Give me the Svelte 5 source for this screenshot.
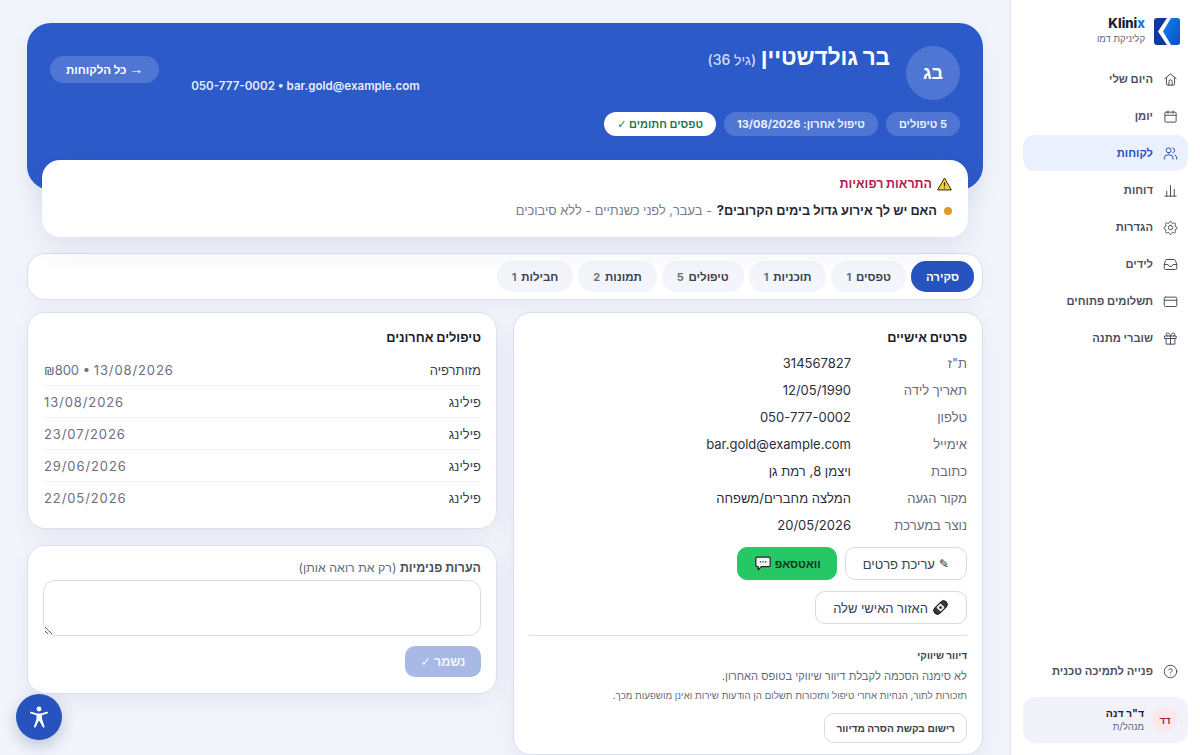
<script lang="ts">
  const nav = [
    { label: "היום שלי", icon: "home" },
    { label: "יומן", icon: "calendar" },
    { label: "לקוחות", icon: "users", active: true },
    { label: "דוחות", icon: "chart" },
    { label: "הגדרות", icon: "gear" },
    { label: "לידים", icon: "inbox" },
    { label: "תשלומים פתוחים", icon: "card" },
    { label: "שוברי מתנה", icon: "gift" },
  ];

  const icons: Record<string, string> = {
    home: "M3 10.5 12 3l9 7.5M5.5 9v10a2 2 0 0 0 2 2h9a2 2 0 0 0 2-2V9M9.5 21v-6a2.5 2.5 0 0 1 5 0v6",
    calendar: "M5 5h14a2 2 0 0 1 2 2v12a2 2 0 0 1-2 2H5a2 2 0 0 1-2-2V7a2 2 0 0 1 2-2zM3 10h18M8 3v4M16 3v4",
    users: "M9 11a4 4 0 1 0 0-8 4 4 0 0 0 0 8zM2 21v-1a6 6 0 0 1 6-6h2a6 6 0 0 1 6 6v1M16 3.2a4 4 0 0 1 0 7.6M19 14.3a6 6 0 0 1 3 5.2V21",
    chart: "M3 21h18M6 21v-8M12 21V4M18 21v-11",
    gear: "M12 8.5a3.5 3.5 0 1 0 0 7 3.5 3.5 0 0 0 0-7zM10.3 3.3a1.8 1.8 0 0 1 3.4 0l.3 1a1.8 1.8 0 0 0 2.6 1l.9-.5a1.8 1.8 0 0 1 2.4 2.4l-.5.9a1.8 1.8 0 0 0 1 2.6l1 .3a1.8 1.8 0 0 1 0 3.4l-1 .3a1.8 1.8 0 0 0-1 2.6l.5.9a1.8 1.8 0 0 1-2.4 2.4l-.9-.5a1.8 1.8 0 0 0-2.6 1l-.3 1a1.8 1.8 0 0 1-3.4 0l-.3-1a1.8 1.8 0 0 0-2.6-1l-.9.5a1.8 1.8 0 0 1-2.4-2.4l.5-.9a1.8 1.8 0 0 0-1-2.6l-1-.3a1.8 1.8 0 0 1 0-3.4l1-.3a1.8 1.8 0 0 0 1-2.6l-.5-.9a1.8 1.8 0 0 1 2.4-2.4l.9.5a1.8 1.8 0 0 0 2.6-1z",
    inbox: "M6 4h12a2 2 0 0 1 1.9 1.4L22 12v6a2 2 0 0 1-2 2H4a2 2 0 0 1-2-2v-6l2.1-6.6A2 2 0 0 1 6 4zM2 12h6l2 3h4l2-3h6",
    card: "M4 5h16a2 2 0 0 1 2 2v11a2 2 0 0 1-2 2H4a2 2 0 0 1-2-2V7a2 2 0 0 1 2-2zM2 10h20",
    gift: "M3 8h18v4H3zM5 12v9h14v-9M12 8v13M12 8S10.5 3 7.5 3a2.5 2.5 0 0 0 0 5M12 8s1.5-5 4.5-5a2.5 2.5 0 0 1 0 5",
  };

  const chips = ["5 טיפולים", "טיפול אחרון: 13/08/2026"];

  const tabs = [
    { label: "סקירה", active: true },
    { label: "טפסים", count: 1 },
    { label: "תוכניות", count: 1 },
    { label: "טיפולים", count: 5 },
    { label: "תמונות", count: 2 },
    { label: "חבילות", count: 1 },
  ];

  const details = [
    ["ת\"ז", "314567827"],
    ["תאריך לידה", "12/05/1990"],
    ["טלפון", "050-777-0002"],
    ["אימייל", "bar.gold@example.com"],
    ["כתובת", "ויצמן 8, רמת גן"],
    ["מקור הגעה", "המלצה מחברים/משפחה"],
    ["נוצר במערכת", "20/05/2026"],
  ];

  const treatments = [
    { name: "מזותרפיה", price: "₪800 • ", date: "13/08/2026" },
    { name: "פילינג", price: "", date: "13/08/2026" },
    { name: "פילינג", price: "", date: "23/07/2026" },
    { name: "פילינג", price: "", date: "29/06/2026" },
    { name: "פילינג", price: "", date: "22/05/2026" },
  ];
</script>

<div class="layout" dir="rtl">
  <aside class="sidebar">
    <div class="brand">
      <svg class="logo" viewBox="0 0 26 27" width="26" height="27" aria-hidden="true">
        <defs>
          <linearGradient id="lg" x1="0" y1="0" x2="1" y2="1">
            <stop offset="0" stop-color="#0a84f0" />
            <stop offset="1" stop-color="#0f4fc4" />
          </linearGradient>
        </defs>
        <rect width="26" height="27" rx="3" fill="#0d3a9c" />
        <path d="M13 0h10a3 3 0 0 1 3 3v21a3 3 0 0 1-3 3H13L4 13.5z" fill="#fff" />
        <path d="M17 0h6a3 3 0 0 1 3 3v21a3 3 0 0 1-3 3h-6l-8-13.5z" fill="url(#lg)" />
      </svg>
      <div class="brand-text">
        <div class="brand-name" dir="ltr">Klini<span>x</span></div>
        <div class="brand-sub">קליניקת דמו</div>
      </div>
    </div>

    <nav class="nav">
      {#each nav as item}
        <div class="nav-item" class:active={item.active}>
          <svg viewBox="0 0 24 24" width="15" height="15" class="nav-icon"><path d={icons[item.icon]} /></svg>
          <span>{item.label}</span>
        </div>
      {/each}
    </nav>

    <div class="side-bottom">
      <div class="nav-item">
        <svg viewBox="0 0 24 24" width="15" height="15" class="nav-icon">
          <circle cx="12" cy="12" r="10" />
          <path d="M9.2 9.3a2.9 2.9 0 0 1 5.6 1c0 2-2.8 2.4-2.8 4M12 17.6v.1" />
        </svg>
        <span>פנייה לתמיכה טכנית</span>
      </div>
      <div class="user">
        <div class="user-avatar">דד</div>
        <div>
          <div class="user-name">ד"ר דנה</div>
          <div class="user-role">מנהל/ת</div>
        </div>
      </div>
    </div>
  </aside>

  <main class="main">
    <section class="hero">
      <div class="hero-top">
        <div class="avatar">בג</div>
        <div class="hero-id">
          <h1>בר גולדשטיין <small>(גיל 36)</small></h1>
        </div>
        <div class="hero-contact" dir="ltr">050-777-0002 • bar.gold@example.com</div>
        <button class="back"><span class="arrow">→</span> כל הלקוחות</button>
      </div>
      <div class="chips">
        {#each chips as chip}
          <span class="chip">{chip}</span>
        {/each}
        <span class="chip chip-ok">טפסים חתומים <span class="check">✓</span></span>
      </div>
    </section>

    <section class="alerts">
      <div class="alert-title">
        <svg viewBox="0 0 24 22" width="15" height="14">
          <path d="M12 1.5 23 20.5H1z" fill="#fbd02c" stroke="#2b2b1a" stroke-width="1.6" stroke-linejoin="round" />
          <path d="M12 8v6.5M12 16.5v1.6" stroke="#2b2b1a" stroke-width="2" />
        </svg>
        התראות רפואיות
      </div>
      <div class="alert-row">
        <i class="dot"></i>
        <b>האם יש לך אירוע גדול בימים הקרובים?</b>
        <span>- בעבר, לפני כשנתיים - ללא סיבוכים</span>
      </div>
    </section>

    <div class="tabs">
      {#each tabs as tab}
        <button class="tab" class:active={tab.active}>
          {tab.label}
          {#if tab.count}<span class="count">{tab.count}</span>{/if}
        </button>
      {/each}
    </div>

    <div class="columns">
      <section class="card details">
        <h2>פרטים אישיים</h2>
        <div class="rows">
          {#each details as [k, v]}
            <div class="row">
              <span class="key">{k}</span>
              <span class="val">{v}</span>
            </div>
          {/each}
        </div>
        <div class="actions">
          <button class="btn"><span class="pencil">✎</span> עריכת פרטים</button>
          <button class="btn wa">
            <svg viewBox="0 0 20 18" width="16" height="15">
              <path d="M3 1h14a2 2 0 0 1 2 2v8a2 2 0 0 1-2 2H8l-4 4v-4H3a2 2 0 0 1-2-2V3a2 2 0 0 1 2-2z" fill="#f4f4f4" stroke="#222" stroke-width="1.5" stroke-linejoin="round" />
              <path d="M6 7h1.6M9.3 7h1.6M12.600 7h1.6" stroke="#222" stroke-width="1.6" />
            </svg>
            וואטסאפ
          </button>
        </div>
        <div class="actions">
          <button class="btn">
            <svg viewBox="0 0 20 20" width="17" height="17">
              <rect x="0.5" y="5.5" width="19" height="9" rx="4.5" transform="rotate(-45 10 10)" fill="#3a3a3a" stroke="#111" />
              <rect x="6" y="6" width="8" height="8" rx="1.500" transform="rotate(-45 10 10)" fill="#e4e4e4" stroke="#111" />
              <circle cx="10" cy="10" r="1.5" fill="#222" />
            </svg>
            האזור האישי שלה
          </button>
        </div>
        <div class="marketing">
          <h3>דיוור שיווקי</h3>
          <p class="m1">לא סימנה הסכמה לקבלת דיוור שיווקי בטופס האחרון.</p>
          <p class="m2">תזכורות לתור, הנחיות אחרי טיפול ותזכורות תשלום הן הודעות שירות ואינן מושפעות מכך.</p>
          <button class="btn small">רישום בקשת הסרה מדיוור</button>
        </div>
      </section>

      <div class="side-col">
        <section class="card recent">
          <h2>טיפולים אחרונים</h2>
          <div class="t-list">
            {#each treatments as t}
              <div class="t-row">
                <span class="t-name">{t.name}</span>
                <span class="t-meta" dir="ltr">{t.price}<span class="t-date">{t.date}</span></span>
              </div>
            {/each}
          </div>
        </section>

        <section class="card notes">
          <label for="notes"><b>הערות פנימיות</b> (רק את רואה אותן)</label>
          <textarea id="notes"></textarea>
          <button class="save">נשמר <span class="check">✓</span></button>
        </section>
      </div>
    </div>
  </main>

  <button class="a11y" aria-label="נגישות">
    <svg viewBox="0 0 24 24" width="24" height="24" fill="#fff">
      <circle cx="12" cy="4" r="2.4" />
      <path d="M3 7.6c0-.7.6-1.1 1.2-.9l5 1.5c1.6.4 3.9.4 5.6 0l5-1.5c.6-.2 1.2.2 1.2.9 0 .4-.3.8-.7.9l-5.3 1.7v3.6l2.5 7.6c.2.6-.1 1.1-.7 1.2-.4.1-.9-.2-1-.6L12.4 16h-.8l-2.900 6c-.2.4-.6.7-1 .6-.6-.1-.9-.6-.7-1.2l2.500-7.600v-3.600L3.700 8.500c-.4-.1-.7-.5-.7-.9z" />
    </svg>
  </button>
</div>

<style>
  :global(html), :global(body) {
    margin: 0;
    height: 100%;
    overflow: hidden;
  }

  :global(body) {
    background: #f3f5fc;
    font-family: Inter, "Noto Sans", "Liberation Sans", sans-serif;
    color: #1f2430;
  }

  button {
    font-family: inherit;
    cursor: pointer;
  }

  .layout {
    display: flex;
    height: 755px;
    overflow: hidden;
  }

  .check {
    font-family: "DejaVu Sans", sans-serif;
    font-weight: 400;
  }

  /* SIDEBAR */
  .sidebar {
    box-sizing: border-box;
    width: 190px;
    flex: none;
    background: #fff;
    border-left: 1px solid #dfe2ee;
    padding: 18px 12px 12px 12px;
    display: flex;
    flex-direction: column;
  }

  .brand {
    display: flex;
    align-items: center;
    gap: 9px;
    padding: 0 8px 0 0;
    margin-bottom: 16px;
  }

  .brand-text {
    margin-top: -2px;
  }

  .brand-name {
    font-size: 13px;
    font-weight: 800;
    line-height: 15px;
    color: #15203a;
    text-align: right;
  }
  .brand-name span { color: #1576e0; }

  .brand-sub {
    font-size: 9.5px;
    line-height: 13px;
    color: #5f6675;
    margin-top: 1px;
  }

  .nav {
    display: flex;
    flex-direction: column;
    gap: 1px;
  }

  .nav-item {
    display: flex;
    align-items: center;
    gap: 10px;
    height: 36px;
    padding: 0 10px;
    border-radius: 12px;
    font-size: 11.2px;
    font-weight: 600;
    color: #4b5160;
  }

  .nav-item.active {
    background: #eaf0fd;
    color: #2653bd;
    font-weight: 700;
  }

  .nav-icon {
    flex: none;
    fill: none;
    stroke: currentColor;
    stroke-width: 1.6;
    stroke-linecap: round;
    stroke-linejoin: round;
  }

  .side-bottom {
    margin-top: auto;
    display: flex;
    flex-direction: column;
    gap: 8px;
  }

  .user {
    display: flex;
    align-items: center;
    gap: 8px;
    height: 46px;
    padding: 0 10px;
    border-radius: 12px;
    background: #f2f3fa;
  }

  .user-avatar {
    width: 26px;
    height: 26px;
    border-radius: 50%;
    background: #fbe8ec;
    color: #a8203f;
    font-size: 9.5px;
    font-weight: 700;
    display: flex;
    align-items: center;
    justify-content: center;
  }

  .user-name {
    font-size: 10.5px;
    font-weight: 700;
    line-height: 13px;
  }

  .user-role {
    font-size: 9.5px;
    line-height: 13px;
    color: #5f6675;
  }

  /* MAIN */
  .main {
    flex: 1;
    min-width: 0;
    padding: 23px 27px 0 27px;
  }

  .hero {
    box-sizing: border-box;
    height: 167px;
    background: #2c5ac8;
    border-radius: 24px;
    color: #fff;
    padding: 23px 23px 0;
    box-shadow: 0 8px 24px rgba(30, 50, 110, 0.08);
  }

  .hero-top {
    display: flex;
    align-items: flex-start;
    gap: 16px;
    height: 66px;
  }

  .avatar {
    width: 54px;
    height: 54px;
    flex: none;
    border-radius: 50%;
    background: #5076d3;
    font-size: 18px;
    font-weight: 800;
    display: flex;
    align-items: center;
    justify-content: center;
  }

  .hero-id {
    flex: 1;
  }

  h1 {
    margin: -2px 0 0;
    font-size: 22.5px;
    line-height: 26px;
    font-weight: 900;
  }

  h1 small {
    font-size: 14px;
    font-weight: 500;
    color: #d5dff7;
  }

  .hero-contact {
    font-size: 11.6px;
    font-weight: 600;
    color: #e6ecfb;
    margin-top: 33px;
    margin-inline-end: -16px;
    white-space: nowrap;
  }

  .back {
    height: 27px;
    margin-top: 10px;
    padding: 0 16px;
    border: none;
    border-radius: 14px;
    background: #5076d3;
    color: #fff;
    font-size: 11.5px;
    font-weight: 700;
    margin-inline-start: 16px;
    white-space: nowrap;
  }

  .arrow {
    font-family: "Liberation Sans", sans-serif;
    font-size: 14px;
    font-weight: 400;
    line-height: 1;
  }

  .chips {
    display: flex;
    gap: 8px;
  }

  .chip {
    height: 24px;
    padding: 0 13px;
    border-radius: 12px;
    background: #5076d3;
    font-size: 11px;
    font-weight: 700;
    line-height: 24px;
    color: #eef2fc;
  }

  .chip-ok {
    background: #fff;
    color: #1c7a50;
  }

  .alerts {
    box-sizing: border-box;
    height: 77px;
    margin: -30px 15px 0;
    position: relative;
    background: #fff;
    border-radius: 18px;
    padding: 15px 16px 0;
    box-shadow: 0 10px 30px rgba(30, 50, 110, 0.1);
  }

  .alert-title {
    display: flex;
    align-items: center;
    gap: 5px;
    font-size: 12.5px;
    font-weight: 800;
    color: #b81e4d;
    line-height: 18px;
  }

  .alert-row {
    display: flex;
    align-items: center;
    gap: 5px;
    margin-top: 9px;
    font-size: 12.8px;
    line-height: 18px;
    color: #777d8a;
  }

  .alert-row b {
    color: #252a36;
    font-weight: 700;
  }

  .dot {
    width: 8px;
    height: 8px;
    border-radius: 50%;
    background: #e09a2c;
    margin-left: 2px;
  }

  .tabs {
    box-sizing: border-box;
    height: 47px;
    margin-top: 16px;
    padding: 7px 8px;
    display: flex;
    gap: 5px;
    background: #fff;
    border: 1px solid #dcdfec;
    border-radius: 18px;
    box-shadow: 0 6px 20px rgba(30, 50, 110, 0.05);
  }

  .tab {
    height: 31px;
    padding: 0 15px;
    border: none;
    border-radius: 15px;
    background: #f3f5fb;
    color: #3b4150;
    font-size: 11.5px;
    font-weight: 700;
    white-space: nowrap;
  }

  .tab.active {
    background: #2653bd;
    color: #fff;
  }

  .count {
    font-size: 11px;
    font-weight: 700;
    color: #6a7080;
    margin-inline-start: 2px;
  }

  .columns {
    display: grid;
    grid-template-columns: 470px 470px;
    gap: 16px;
    margin-top: 12px;
    align-items: start;
  }

  .card {
    box-sizing: border-box;
    background: #fff;
    border: 1px solid #dcdfec;
    border-radius: 18px;
    box-shadow: 0 8px 24px rgba(30, 50, 110, 0.07);
  }

  h2 {
    margin: 0;
    font-size: 12.8px;
    line-height: 18px;
    font-weight: 800;
    color: #1c2130;
  }

  .details {
    padding: 16px 15px 11px;
  }

  .rows {
    margin-top: 3px;
  }

  .row {
    display: flex;
    height: 26.9px;
    align-items: center;
    font-size: 13px;
  }

  .key {
    width: 116px;
    color: #666c7a;
  }

  .val {
    color: #2a2f3b;
  }

  .actions {
    display: flex;
    gap: 8px;
    margin-top: 9px;
  }
  .actions + .actions { margin-top: 11px; }

  .btn {
    display: inline-flex;
    align-items: center;
    gap: 4px;
    height: 33px;
    padding: 0 17px;
    background: #fff;
    border: 1px solid #d6dae8;
    border-radius: 10px;
    color: #3a3f4c;
    font-size: 13px;
    font-weight: 500;
  }

  .pencil {
    font-family: "DejaVu Sans", sans-serif;
    font-size: 12px;
    color: #222;
  }

  .btn.wa {
    background: #25c864;
    border-color: #25c864;
    color: #14331f;
    font-weight: 700;
    font-size: 11.5px;
    padding: 0 15px 0 17px;
    flex-direction: row-reverse;
  }

  .marketing {
    margin-top: 11px;
    padding-top: 12px;
    border-top: 1px solid #dcdfec;
  }

  h3 {
    margin: 0;
    font-size: 10px;
    line-height: 14px;
    font-weight: 700;
    color: #3a3f4c;
  }

  .m1 {
    margin: 6px 0 0;
    font-size: 11.15px;
    line-height: 16px;
    color: #666c7a;
  }

  .m2 {
    margin: 4px 0 0;
    font-size: 9.7px;
    line-height: 16px;
    color: #666c7a;
  }

  .btn.small {
    margin-top: 9px;
    height: 30px;
    padding: 0 11px;
    font-size: 10.2px;
    font-weight: 600;
  }

  .side-col {
    display: flex;
    flex-direction: column;
    gap: 16px;
  }

  .recent {
    height: 217px;
    padding: 16px 15px 0 16px;
  }

  .t-list {
    margin-top: 7px;
  }

  .t-row {
    display: flex;
    justify-content: space-between;
    align-items: center;
    height: 31px;
    font-size: 13px;
    border-bottom: 1px solid #f1f2f7;
  }
  .t-row:last-child { border-bottom: none; }

  .t-name { color: #3a3f4c; }
  .t-meta { color: #6a7080; }
  .t-date { letter-spacing: 0.9px; }

  .notes {
    height: 148.5px;
    padding: 14px 15px 0;
    display: flex;
    flex-direction: column;
  }

  label {
    font-size: 12.4px;
    line-height: 16px;
    color: #666c7a;
  }

  label b {
    color: #4b5160;
  }

  textarea {
    box-sizing: border-box;
    height: 56px;
    margin-top: 4px;
    border: 1px solid #dcdde6;
    border-radius: 12px;
    background: #fff;
    outline: none;
    resize: vertical;
  }

  .save {
    align-self: flex-start;
    width: 76px;
    height: 31px;
    margin-top: 10px;
    border: none;
    border-radius: 10px;
    background: #a8b9e6;
    color: #f3f6fd;
    font-size: 12.5px;
    font-weight: 700;
  }

  .a11y {
    position: fixed;
    left: 16px;
    bottom: 15px;
    width: 46px;
    height: 46px;
    border: none;
    border-radius: 50%;
    background: #2653bd;
    display: flex;
    align-items: center;
    justify-content: center;
    box-shadow: 0 6px 16px rgba(30, 50, 110, 0.25);
    padding: 0;
  }
</style>
